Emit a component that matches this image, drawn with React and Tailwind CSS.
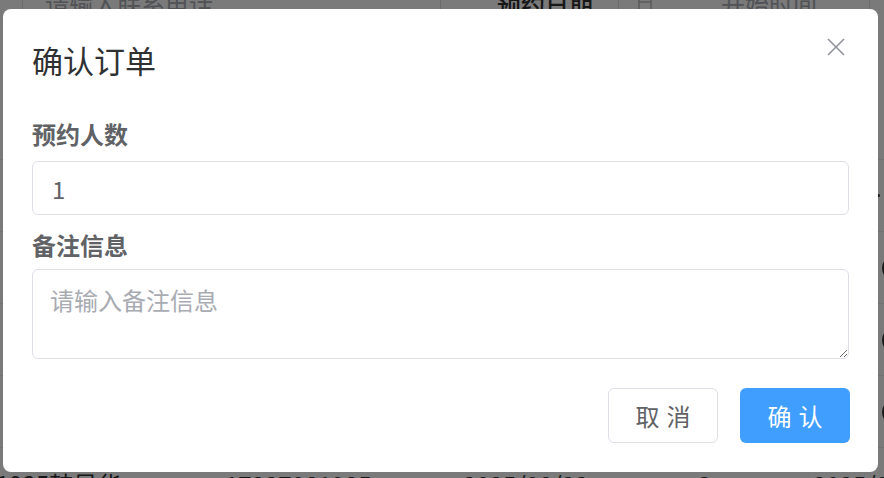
import React from "react";

const font = { fontFamily: '"Noto Sans CJK SC", "Noto Sans", sans-serif' };

export default function App() {
  return (
    <div className="relative h-[478px] w-[884px] overflow-hidden bg-white" style={font}>
      {/* underlying page */}
      <div className="flex flex-col">
        <div className="-mt-[22px] flex h-[52px] items-center text-[24px]">
          <div className="ml-[22px] flex h-[52px] w-[419px] items-center border border-[#dcdfe6] pl-[22px] text-[#a8abb2]">
            请输入联系电话
          </div>
          <div className="ml-[56px] w-[121px] font-medium text-[#303133]">预约日期</div>
          <div className="flex h-[52px] w-[252px] items-center border border-[#dcdfe6] pl-[19px] text-[#a8abb2]">
            <svg width="14" height="14" viewBox="0 0 14 14" className="shrink-0">
              <rect x="1" y="2" width="12" height="11" fill="none" stroke="#a8abb2" strokeWidth="1.2" />
              <line x1="1" y1="5" x2="13" y2="5" stroke="#a8abb2" strokeWidth="1.2" />
            </svg>
            <span className="ml-[69px]">开始时间</span>
          </div>
        </div>
        <div className="h-[130px] border-b border-[#ebeef5]" />
        <div className="flex h-[72px] items-center border-b border-[#ebeef5]">
          <div className="ml-[877px] h-[3px] w-[3px] shrink-0 rounded-full bg-[#303133]" />
        </div>
        {[0, 1, 2].map((i) => (
          <div key={i} className="flex h-[72px] items-center border-b border-[#ebeef5]">
            <div className="ml-[882px] h-[24px] w-[24px] shrink-0 rounded-full bg-[#303133]" />
          </div>
        ))}
        <div className="flex h-[72px] items-center text-[24px] text-[#303133]">
          <span className="ml-[-4px] w-[229px] shrink-0">1925韩昊华</span>
          <span className="w-[238px] shrink-0">17237081925</span>
          <span className="w-[235px] shrink-0">2025/08/23</span>
          <span className="w-[115px] shrink-0">3</span>
          <span className="shrink-0">2025/08/23</span>
        </div>
      </div>

      {/* overlay */}
      <div className="absolute inset-0 bg-[rgba(0,0,0,0.52)]" />

      {/* dialog */}
      <div className="absolute left-[3px] top-[9px] flex h-[463px] w-[875px] flex-col rounded-[8px] bg-white px-[29px] pt-[31px]">
        <div className="flex items-start justify-between">
          <div className="h-[40px] text-[31px] leading-[40px] text-[#303133]">确认订单</div>
          <svg width="20" height="20" viewBox="0 0 20 20" className="mr-[3px] mt-[-3px]">
            <line x1="2" y1="2" x2="18" y2="18" stroke="#909399" strokeWidth="1.6" />
            <line x1="18" y1="2" x2="2" y2="18" stroke="#909399" strokeWidth="1.6" />
          </svg>
        </div>
        <div className="mt-[38px] h-[32px] text-[24px] font-bold leading-[32px] text-[#606266]">预约人数</div>
        <input
          defaultValue="1"
          className="mt-[11px] h-[54px] w-full rounded-[6px] border border-[#dcdfe6] px-[19px] text-[24px] text-[#606266] outline-none"
          style={font}
        />
        <div className="mt-[14px] h-[32px] text-[24px] font-bold leading-[32px] text-[#606266]">备注信息</div>
        <textarea
          placeholder="请输入备注信息"
          className="mt-[8px] h-[90px] w-full rounded-[6px] border border-[#dcdfe6] px-[17px] py-[12px] text-[24px] leading-[36px] text-[#606266] outline-none placeholder:text-[#a8abb2]"
          style={font}
        />
        <div className="mr-[-1px] mt-[29px] flex justify-end gap-[22px]">
          <button className="flex h-[55px] w-[110px] items-center justify-center gap-[7px] rounded-[6px] border border-[#dcdfe6] bg-white text-[24px] text-[#606266]" style={font}>
            <span>取</span>
            <span>消</span>
          </button>
          <button className="flex h-[55px] w-[110px] items-center justify-center gap-[7px] rounded-[6px] bg-[#409eff] text-[24px] text-white" style={font}>
            <span>确</span>
            <span>认</span>
          </button>
        </div>
      </div>
    </div>
  );
}
